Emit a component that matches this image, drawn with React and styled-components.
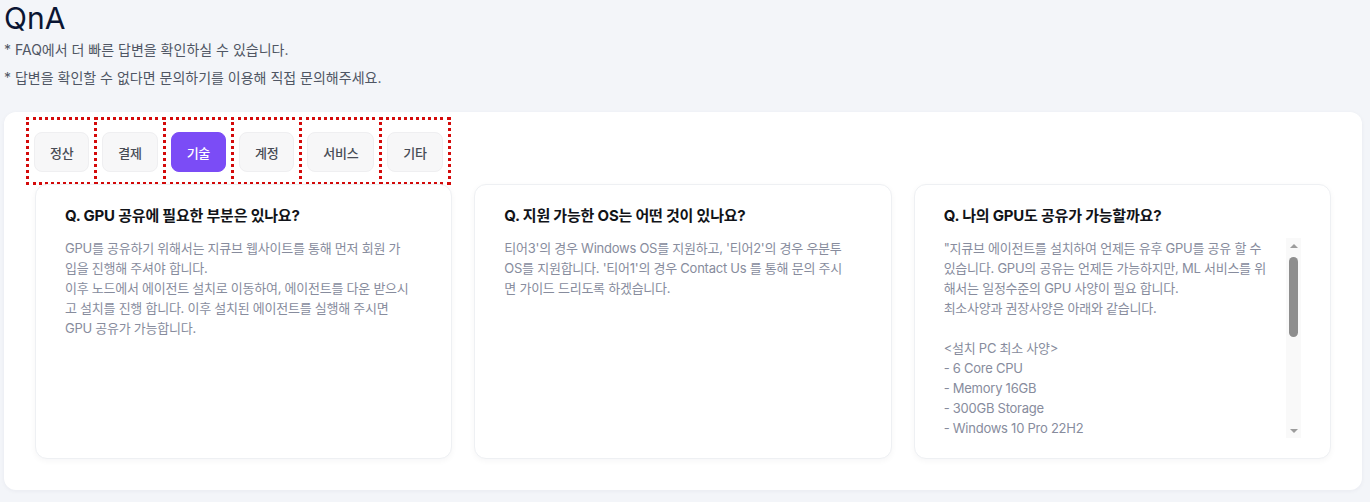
import React, { useLayoutEffect, useRef, useState } from "react";
import styled, { createGlobalStyle } from "styled-components";

const Global = createGlobalStyle`
  * { box-sizing: border-box; }
  body {
    margin: 0;
    background: #f3f5f9;
    font-family: Inter, "Noto Sans CJK KR", sans-serif;
  }
`;

const Page = styled.div`
  padding: 0 8px 12px 4px;
`;

const Title = styled.h1`
  margin: 0;
  font-size: 30px;
  line-height: 36px;
  font-weight: 400;
  color: #0b1533;
`;

const Note = styled.p`
  margin: ${(p) => (p.$first ? "4px" : "8px")} 0 0;
  font-size: 14px;
  line-height: 20px;
  letter-spacing: 0;
  color: #4f5664;
`;

const Panel = styled.section`
  margin-top: 24px;
  background: #fff;
  border-radius: 12px;
  padding: 5px 31px 31px 22px;
  box-shadow: 0 1px 4px rgba(30, 40, 80, 0.05);
`;

const TabRow = styled.div`
  display: flex;
`;

const TabCell = styled.div`
  border: 3px dotted #d40a0a;
  padding: 12px 5px 10px;
  & + & {
    margin-left: -3px;
  }
`;

const TabButton = styled.button`
  height: 40px;
  padding: 0 15px;
  border-radius: 8px;
  border: 1px solid ${(p) => (p.$active ? "#7b4cf6" : "#efeff1")};
  background: ${(p) => (p.$active ? "#7b4cf6" : "#f7f7f8")};
  color: ${(p) => (p.$active ? "#ffffff" : "#484c55")};
  font-family: inherit;
  font-size: 13px;
  font-weight: 500;
  letter-spacing: -0.3px;
  cursor: pointer;
`;

const CardGrid = styled.div`
  display: grid;
  grid-template-columns: repeat(3, 1fr);
  gap: 22px;
  margin: -1px 0 0 9px;
`;

const Card = styled.article`
  background: #fff;
  border: 1px solid #eef0f3;
  border-radius: 12px;
  padding: 19px 29px 20px;
  box-shadow: 0 2px 6px rgba(20, 30, 60, 0.04);
`;

const Question = styled.h3`
  margin: 0 0 10px;
  font-size: 15px;
  line-height: 24px;
  font-weight: 700;
  letter-spacing: -0.2px;
  color: #111318;
`;

const Answer = styled.div`
  font-size: 13px;
  line-height: 20px;
  letter-spacing: -0.25px;
  color: #878c9d;
  white-space: nowrap;
`;

const Line = styled.div`
  min-height: 20px;
`;

const ScrollBox = styled.div`
  display: flex;
  height: 200px;
`;

const ScrollText = styled(Answer)`
  flex: 1;
  min-width: 0;
  overflow-y: auto;
  scrollbar-width: none;
  &::-webkit-scrollbar {
    display: none;
  }
`;

const Rail = styled.div`
  flex: none;
  width: 15px;
  background: #f9f9f9;
  display: flex;
  flex-direction: column;
  align-items: center;
`;

const ArrowButton = styled.div`
  flex: none;
  width: 15px;
  height: 15px;
  display: flex;
  align-items: center;
  justify-content: center;
  &::before {
    content: "";
    width: 0;
    height: 0;
    border-left: 4px solid transparent;
    border-right: 4px solid transparent;
    ${(p) =>
      p.$down
        ? "border-top: 4px solid #9c9c9c;"
        : "border-bottom: 4px solid #9c9c9c;"}
  }
`;

const Track = styled.div`
  flex: 1;
  width: 100%;
  padding: 4px 0 2px;
  display: flex;
  flex-direction: column;
  align-items: center;
`;

const Thumb = styled.div`
  width: 9px;
  border-radius: 5px;
  background: #8e8e8e;
`;

const TRACK_SPACE = 168;

function ScrollAnswer({ lines }) {
  const ref = useRef(null);
  const [m, setM] = useState({ pos: 0, ratio: 0.476 });
  const measure = () => {
    const el = ref.current;
    if (!el) return;
    const max = el.scrollHeight - el.clientHeight;
    setM({
      pos: max > 0 ? el.scrollTop / max : 0,
      ratio: el.scrollHeight ? el.clientHeight / el.scrollHeight : 1,
    });
  };
  useLayoutEffect(measure, []);
  const thumb = Math.round(TRACK_SPACE * m.ratio);
  return (
    <ScrollBox>
      <ScrollText ref={ref} onScroll={measure}>
        {lines.map((l, i) => (
          <Line key={i}>{l}</Line>
        ))}
      </ScrollText>
      <Rail>
        <ArrowButton />
        <Track>
          <Thumb
            style={{
              height: thumb,
              marginTop: Math.round(m.pos * (TRACK_SPACE - 6 - thumb)),
            }}
          />
        </Track>
        <ArrowButton $down />
      </Rail>
    </ScrollBox>
  );
}

const tabs = ["정산", "결제", "기술", "계정", "서비스", "기타"];

const cards = [
  {
    q: "Q. GPU 공유에 필요한 부분은 있나요?",
    a: [
      "GPU를 공유하기 위해서는 지큐브 웹사이트를 통해 먼저 회원 가",
      "입을 진행해 주셔야 합니다.",
      "이후 노드에서 에이전트 설치로 이동하여, 에이전트를 다운 받으시",
      "고 설치를 진행 합니다. 이후 설치된 에이전트를 실행해 주시면",
      "GPU 공유가 가능합니다.",
    ],
  },
  {
    q: "Q. 지원 가능한 OS는 어떤 것이 있나요?",
    a: [
      "티어3'의 경우 Windows OS를 지원하고, '티어2'의 경우 우분투",
      "OS를 지원합니다. '티어1'의 경우 Contact Us 를 통해 문의 주시",
      "면 가이드 드리도록 하겠습니다.",
    ],
  },
  {
    q: "Q. 나의 GPU도 공유가 가능할까요?",
    scroll: true,
    a: [
      "\"지큐브 에이전트를 설치하여 언제든 유후 GPU를 공유 할 수",
      "있습니다. GPU의 공유는 언제든 가능하지만, ML 서비스를 위",
      "해서는 일정수준의 GPU 사양이 필요 합니다.",
      "최소사양과 권장사양은 아래와 같습니다.",
      "",
      "<설치 PC 최소 사양>",
      "- 6 Core CPU",
      "- Memory 16GB",
      "- 300GB Storage",
      "- Windows 10 Pro 22H2",
      "- NVIDIA GTX 1060 6GB 이상",
      "",
      "<설치 PC 권장 사양>",
      "- 8 Core CPU",
      "- Memory 32GB",
      "- 500GB Storage",
      "- Windows 10 Pro 22H2",
      "- NVIDIA RTX 3060 12GB 이상",
      "",
      "자세한 내용은 설치 가이드를 참고해 주세요.\"",
      "",
    ],
  },
];

export default function App() {
  const [active, setActive] = useState("기술");
  return (
    <Page>
      <Global />
      <Title>QnA</Title>
      <Note $first>* FAQ에서 더 빠른 답변을 확인하실 수 있습니다.</Note>
      <Note>* 답변을 확인할 수 없다면 문의하기를 이용해 직접 문의해주세요.</Note>
      <Panel>
        <TabRow>
          {tabs.map((t) => (
            <TabCell key={t}>
              <TabButton $active={t === active} onClick={() => setActive(t)}>
                {t}
              </TabButton>
            </TabCell>
          ))}
        </TabRow>
        <CardGrid>
          {cards.map((c) => (
            <Card key={c.q}>
              <Question>{c.q}</Question>
              {c.scroll ? (
                <ScrollAnswer lines={c.a} />
              ) : (
                <Answer>
                  {c.a.map((l, i) => (
                    <Line key={i}>{l}</Line>
                  ))}
                </Answer>
              )}
            </Card>
          ))}
        </CardGrid>
      </Panel>
    </Page>
  );
}
